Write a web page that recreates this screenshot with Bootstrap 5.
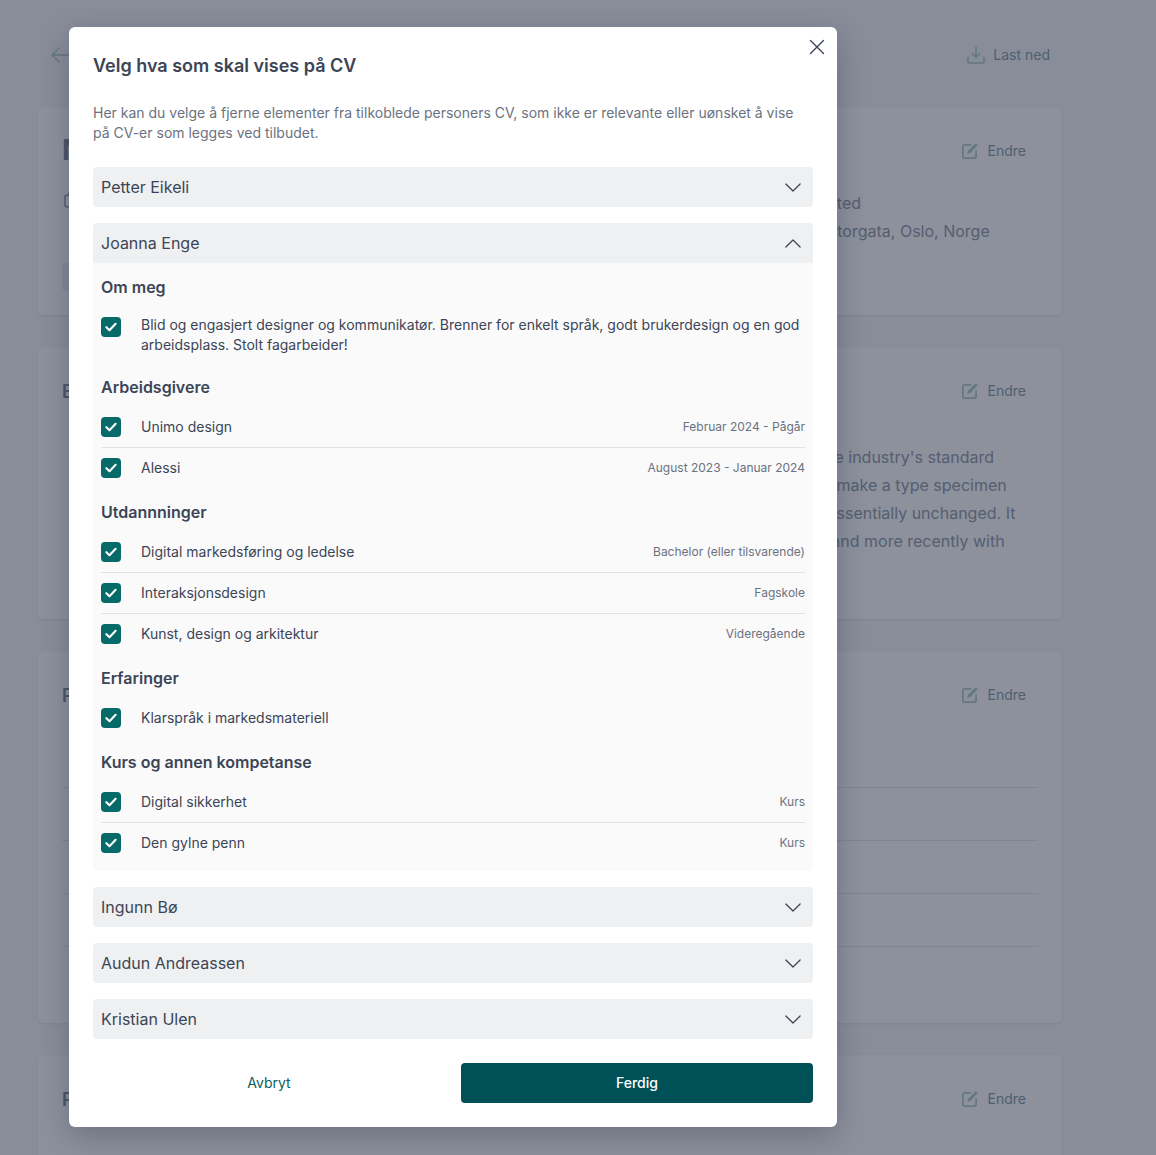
<!doctype html>
<html lang="no">
<head>
<meta charset="utf-8">
<title>Velg hva som skal vises på CV</title>
<link href="https://cdn.jsdelivr.net/npm/bootstrap@5.3.0/dist/css/bootstrap.min.css" rel="stylesheet">
<style>
html,body{height:1155px;overflow:hidden}
body{font-family:Inter,"Liberation Sans",sans-serif;background:#f6f7f8;color:#3c4556;position:relative}
.page-wrap{padding:0 94px 0 38px;height:1155px;overflow:hidden}
.top-row{height:107px;padding:3px 12px 0 13px}
.back-arrow{color:#a8ccc6}
.act{color:#a8ccc6;font-size:14px;line-height:20px;gap:8px}
.act.edit{gap:10px}
.act span{color:#7d9ca8}
.bg-card{background:#fff;border-radius:6px;box-shadow:0 1px 3px rgba(0,0,0,.08);margin-bottom:32px;padding:24px;position:relative}
.c1{height:208px}.c2{height:272px}.c3{height:372px}.c4{height:200px;margin-bottom:0}
.c-title{font-size:28px;font-weight:700;line-height:38px;color:#7f8a96}
.c-title2{font-size:18px;font-weight:600;line-height:24px;margin-top:9px;color:#7f8a96}
.act-wrap{position:absolute;right:36px;top:34px}
.meta{font-size:16px;line-height:28px;color:#8e98a6;margin-top:20px;white-space:nowrap}
.meta-ico{color:#8e98a6;margin:3px 0 0 2px;flex:0 0 auto}
.m1{margin-left:726px}
.m2{margin-left:747px}
.lorem{margin:39px -12px 0 12px;font-size:16px;line-height:28px;color:#8e98a6}
.rows{margin-top:27px}
.bg-row{height:53px;border-bottom:1px solid #e6e7ea}
.bg-row:last-child{border-bottom:0}
.chip{width:100px;height:28px;border-radius:4px;background:#eceef0;margin-top:18px}
.veil{position:absolute;inset:0;background:rgba(28,35,58,.5)}
.sheet{position:absolute;left:69px;top:27px;width:768px;height:1100px;background:#fff;border-radius:6px;padding:24px;box-shadow:0 10px 30px rgba(15,23,42,.25)}
.x-btn{position:absolute;top:12px;right:12px;width:16px;height:16px;padding:0;border:0;background:none;line-height:0;color:#3c4556}
.sheet-title{font-size:18px;line-height:29px;font-weight:600;color:#3c4556;margin:0}
.sheet-lead{font-size:14px;line-height:20px;color:#6b7280;margin:23px 0 24px}
.acc-list{display:flex;flex-direction:column;gap:16px}
.acc-head{height:40px;background:#eff0f2;border-radius:4px;padding:0 12px 0 8px;font-size:16px;line-height:24px;color:#3c4556}
.acc-head.open{border-radius:4px 4px 0 0}
.acc-body{background:#fafafb;border-radius:0 0 4px 4px;padding:12px 8px 8px}
.sec{font-size:16px;line-height:24px;font-weight:600;color:#3c4556;margin:0 0 8px}
.sec-gap{margin-top:12px}
.cv-row{min-height:41px;font-size:14px;line-height:20px;color:#3c4556;gap:20px;border-bottom:1px solid #e2e3e6}
.cv-row.last{border-bottom:0;min-height:40px}
.cv-row.wrap{padding:8px 0;align-items:flex-start!important;min-height:0}
.cv-row.wrap .tick{margin-top:2px}
.tick{flex:0 0 20px;width:20px;height:20px;border-radius:4px;background:#066a68;display:flex;align-items:center;justify-content:center}
.when{margin-left:auto;font-size:12px;line-height:16px;color:#6b7280;white-space:nowrap}
.foot{margin-top:24px}
.btn-cancel{flex:0 0 352px;height:40px;background:none;border:0;color:#0b5f63;font-size:14px;line-height:20px;padding:0}
.btn-done{flex:0 0 352px;height:40px;margin-left:16px;background:#005058;border:0;border-radius:4px;color:#fff;font-size:14px;font-weight:500;line-height:20px;padding:0}
.btn-done:hover{background:#005058;color:#fff}
</style>
</head>
<body>
<svg width="0" height="0" class="d-block" style="height:0">
  <symbol id="i-down" viewBox="0 0 18 10"><path d="M1 1l8 8 8-8" fill="none" stroke="currentColor" stroke-width="1.4" stroke-linecap="round" stroke-linejoin="round"/></symbol>
  <symbol id="i-up" viewBox="0 0 18 10"><path d="M1 9l8-8 8 8" fill="none" stroke="currentColor" stroke-width="1.4" stroke-linecap="round" stroke-linejoin="round"/></symbol>
  <symbol id="i-tick" viewBox="0 0 12 10"><path d="M1.4 5.2l3.1 3L10.6 1.8" fill="none" stroke="#fff" stroke-width="2.1" stroke-linecap="round" stroke-linejoin="round"/></symbol>
  <symbol id="i-edit" viewBox="0 0 16 16"><path d="M8.5 1.8H2.4A1.5 1.5 0 0 0 .9 3.3v10.3a1.5 1.5 0 0 0 1.5 1.5h10.2a1.5 1.5 0 0 0 1.5-1.5V7.8" fill="none" stroke="currentColor" stroke-width="1.7" stroke-linecap="round"/><path d="M13.7.2l2.1 1.9-7.5 7.9-3.2 1 1-3.2z" fill="currentColor"/></symbol>
</svg>

<div class="page-wrap">
  <div class="top-row d-flex justify-content-between align-items-center">
    <svg class="back-arrow" width="20" height="16" viewBox="0 0 20 16"><path d="M8 1L1 8l7 7M1 8h18" fill="none" stroke="currentColor" stroke-width="1.3" stroke-linecap="round" stroke-linejoin="round"/></svg>
    <div class="act d-flex align-items-center">
      <svg width="18" height="18" viewBox="0 0 18 18"><path d="M9 1v10M5 7.5l4 4 4-4M1 11v4.2A1.8 1.8 0 0 0 2.8 17h12.4a1.8 1.8 0 0 0 1.8-1.8V11" fill="none" stroke="currentColor" stroke-width="1.5" stroke-linecap="round" stroke-linejoin="round"/></svg>
      <span>Last ned</span>
    </div>
  </div>

  <div class="bg-card c1">
    <div class="c-title">Nytt tilbud</div>
    <div class="act-wrap act edit d-flex align-items-center"><svg width="16" height="16"><use href="#i-edit"/></svg><span>Endre</span></div>
    <div class="meta d-flex">
      <svg class="meta-ico" width="16" height="16" viewBox="0 0 16 16"><rect x="1" y="3" width="14" height="12" rx="2" fill="none" stroke="currentColor" stroke-width="1.5"/><path d="M5 1v3M11 1v3" stroke="currentColor" stroke-width="1.5" stroke-linecap="round"/></svg>
      <div><div class="m1">Started</div><div class="m2">Storgata, Oslo, Norge</div></div>
    </div>
    <div class="chip"></div>
  </div>
  <div class="bg-card c2">
    <div class="c-title2">Beskrivelse</div>
    <div class="act-wrap act edit d-flex align-items-center"><svg width="16" height="16"><use href="#i-edit"/></svg><span>Endre</span></div>
    <p class="lorem">Lorem Ipsum is simply dummy text of the printing and typesetting industry. Lorem Ipsum has been the industry's standard dummy text ever since the 1500s, when an unknown printer took a galley of type and scrambled it to make a type specimen book. It has survived not only five centuries, but also the leap into electronic typesetting, remaining essentially unchanged. It was popularised in the 1960s with the release of Letraset sheets containing Lorem Ipsum passages, and more recently with desktop publishing software like Aldus PageMaker including versions of Lorem Ipsum.</p>
  </div>
  <div class="bg-card c3">
    <div class="c-title2">Personer</div>
    <div class="act-wrap act edit d-flex align-items-center"><svg width="16" height="16"><use href="#i-edit"/></svg><span>Endre</span></div>
    <div class="rows"><div class="bg-row"></div><div class="bg-row"></div><div class="bg-row"></div><div class="bg-row"></div><div class="bg-row"></div></div>
  </div>
  <div class="bg-card c4">
    <div class="c-title2">Priser</div>
    <div class="act-wrap act edit d-flex align-items-center"><svg width="16" height="16"><use href="#i-edit"/></svg><span>Endre</span></div>
  </div>
</div>

<div class="veil"></div>

<div class="sheet" role="dialog" aria-modal="true">
  <button class="x-btn" type="button" aria-label="Lukk"><svg width="16" height="16" viewBox="0 0 16 16"><path d="M2 2l13 13M15 2L2 15" transform="translate(-.5 -.5)" fill="none" stroke="currentColor" stroke-width="1.4" stroke-linecap="round"/></svg></button>
  <h5 class="sheet-title">Velg hva som skal vises på CV</h5>
  <p class="sheet-lead">Her kan du velge å fjerne elementer fra tilkoblede personers CV, som ikke er relevante eller uønsket å vise på CV-er som legges ved tilbudet.</p>

  <div class="acc-list">
    <div class="acc-head d-flex align-items-center justify-content-between"><span>Petter Eikeli</span><svg width="16" height="9"><use href="#i-down"/></svg></div>
    <div>
      <div class="acc-head open d-flex align-items-center justify-content-between"><span>Joanna Enge</span><svg width="16" height="9"><use href="#i-up"/></svg></div>
      <div class="acc-body">
        <h6 class="sec">Om meg</h6>
        <div class="cv-row wrap last d-flex"><span class="tick"><svg width="12" height="10"><use href="#i-tick"/></svg></span><span>Blid og engasjert designer og kommunikatør. Brenner for enkelt språk, godt brukerdesign og en god arbeidsplass. Stolt fagarbeider!</span></div>

        <h6 class="sec sec-gap">Arbeidsgivere</h6>
        <div class="cv-row d-flex align-items-center"><span class="tick"><svg width="12" height="10"><use href="#i-tick"/></svg></span><span>Unimo design</span><span class="when">Februar 2024 - Pågår</span></div>
        <div class="cv-row last d-flex align-items-center"><span class="tick"><svg width="12" height="10"><use href="#i-tick"/></svg></span><span>Alessi</span><span class="when">August 2023 - Januar 2024</span></div>

        <h6 class="sec sec-gap">Utdannninger</h6>
        <div class="cv-row d-flex align-items-center"><span class="tick"><svg width="12" height="10"><use href="#i-tick"/></svg></span><span>Digital markedsføring og ledelse</span><span class="when">Bachelor (eller tilsvarende)</span></div>
        <div class="cv-row d-flex align-items-center"><span class="tick"><svg width="12" height="10"><use href="#i-tick"/></svg></span><span>Interaksjonsdesign</span><span class="when">Fagskole</span></div>
        <div class="cv-row last d-flex align-items-center"><span class="tick"><svg width="12" height="10"><use href="#i-tick"/></svg></span><span>Kunst, design og arkitektur</span><span class="when">Videregående</span></div>

        <h6 class="sec sec-gap">Erfaringer</h6>
        <div class="cv-row last d-flex align-items-center"><span class="tick"><svg width="12" height="10"><use href="#i-tick"/></svg></span><span>Klarspråk i markedsmateriell</span></div>

        <h6 class="sec sec-gap">Kurs og annen kompetanse</h6>
        <div class="cv-row d-flex align-items-center"><span class="tick"><svg width="12" height="10"><use href="#i-tick"/></svg></span><span>Digital sikkerhet</span><span class="when">Kurs</span></div>
        <div class="cv-row last d-flex align-items-center"><span class="tick"><svg width="12" height="10"><use href="#i-tick"/></svg></span><span>Den gylne penn</span><span class="when">Kurs</span></div>
      </div>
    </div>
    <div class="acc-head d-flex align-items-center justify-content-between"><span>Ingunn Bø</span><svg width="16" height="9"><use href="#i-down"/></svg></div>
    <div class="acc-head d-flex align-items-center justify-content-between"><span>Audun Andreassen</span><svg width="16" height="9"><use href="#i-down"/></svg></div>
    <div class="acc-head d-flex align-items-center justify-content-between"><span>Kristian Ulen</span><svg width="16" height="9"><use href="#i-down"/></svg></div>
  </div>

  <div class="foot d-flex">
    <button class="btn btn-cancel" type="button">Avbryt</button>
    <button class="btn btn-done" type="button">Ferdig</button>
  </div>
</div>
<script src="https://cdn.jsdelivr.net/npm/bootstrap@5.3.0/dist/js/bootstrap.bundle.min.js"></script>
</body>
</html>
